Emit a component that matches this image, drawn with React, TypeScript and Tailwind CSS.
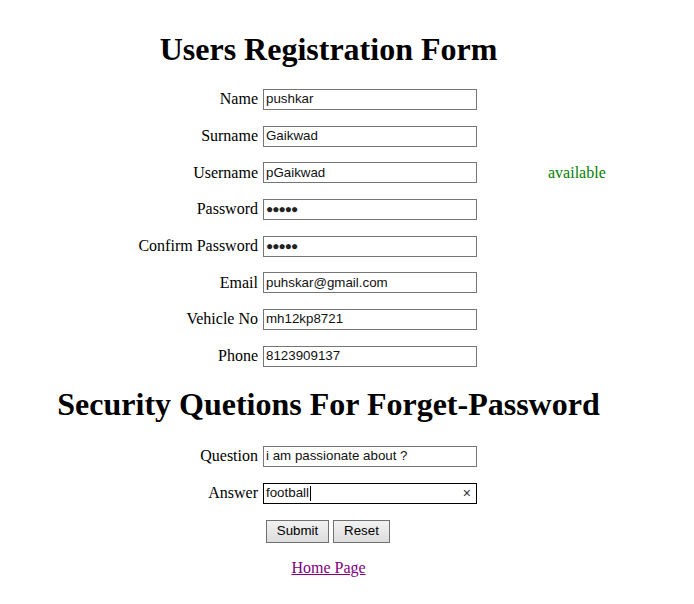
import React from "react";

const serif = { fontFamily: '"Liberation Serif", "Times New Roman", serif' };

function Field({ label, value, type = "text", extra }: { label: string; value: string; type?: string; extra?: React.ReactNode }) {
  return (
    <>
      <div className="flex h-[36.7px] items-center justify-end text-[16px] text-black">{label}</div>
      <div className="flex h-[36.7px] items-center pl-[5px]">
        <div className="flex h-[21px] w-[214px] items-center border border-[#767676] bg-white px-[2px] font-['Liberation_Sans',Arial,sans-serif] text-[13.33px] text-[#111]">
          {type === "password" ? (
            <span className="text-[12px] tracking-[-1px] text-[#222]">●●●●●</span>
          ) : (
            value
          )}
        </div>
      </div>
      <div className="flex h-[36.7px] items-center text-[16px] text-[#008000]">{extra}</div>
    </>
  );
}

export default function App() {
  return (
    <div className="min-h-[604px] w-[657px] bg-white text-black" style={serif}>
      <h1 className="pt-[31px] text-center text-[32px] font-bold leading-[37px]">Users Registration Form</h1>
      <div className="mt-[13px] grid grid-cols-[258px_290px_auto]">
        <Field label="Name" value="pushkar" />
        <Field label="Surname" value="Gaikwad" />
        <Field label="Username" value="pGaikwad" extra={<span>available</span>} />
        <Field label="Password" value="" type="password" />
        <Field label="Confirm Password" value="" type="password" />
        <Field label="Email" value="puhskar@gmail.com" />
        <Field label="Vehicle No" value="mh12kp8721" />
        <Field label="Phone" value="8123909137" />
      </div>
      <h2 className="mt-[11px] text-center text-[32px] font-bold leading-[37px]">Security Quetions For Forget-Password</h2>
      <div className="mt-[15px] grid grid-cols-[258px_290px_auto]">
        <div className="flex h-[37px] items-center justify-end text-[16px]">Question</div>
        <div className="flex h-[37px] items-center pl-[5px]">
          <div className="flex h-[21px] w-[214px] items-center border border-[#767676] px-[2px] font-['Liberation_Sans',Arial,sans-serif] text-[13.33px] text-[#111]">
            i am passionate about ?
          </div>
        </div>
        <div />
        <div className="flex h-[37px] items-center justify-end text-[16px]">Answer</div>
        <div className="flex h-[37px] items-center pl-[5px]">
          <div className="flex h-[21px] w-[214px] items-center justify-between border border-black px-[2px] font-['Liberation_Sans',Arial,sans-serif] text-[13.33px] text-[#111]">
            <span className="flex items-center">
              football<span className="ml-[1px] inline-block h-[15px] w-[1px] bg-black" />
            </span>
            <span className="mr-[3px] text-[14px] leading-none text-[#333]">×</span>
          </div>
        </div>
        <div />
      </div>
      <div className="mt-[8px] flex justify-center gap-[4px] pr-[1px] font-['Liberation_Sans',Arial,sans-serif] text-[13.33px]">
        <button className="h-[23px] w-[63px] border border-[#707070] bg-gradient-to-b from-[#f2f2f2] to-[#dddddd] text-black">Submit</button>
        <button className="h-[23px] w-[57px] border border-[#707070] bg-gradient-to-b from-[#f2f2f2] to-[#dddddd] text-black">Reset</button>
      </div>
      <div className="mt-[13px] text-center text-[16px]">
        <a href="#" className="text-[#800080] underline">Home Page</a>
      </div>
    </div>
  );
}
